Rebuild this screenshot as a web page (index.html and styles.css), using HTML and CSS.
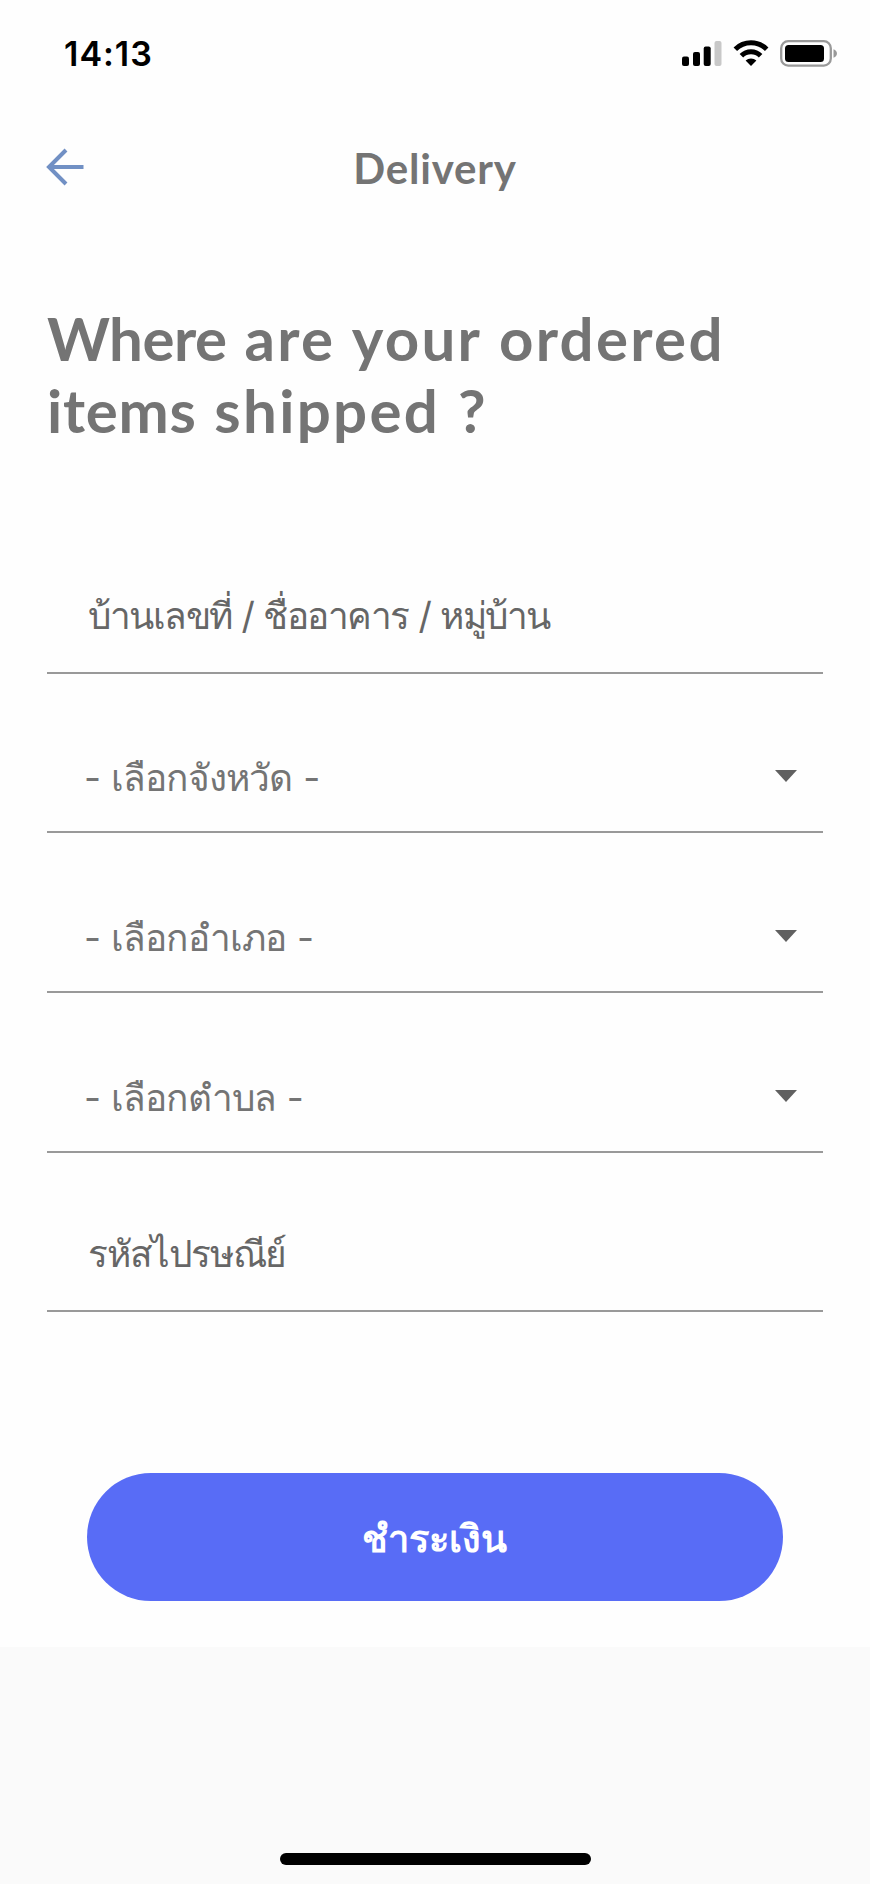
FILE: index.html
```html
<!DOCTYPE html>
<html lang="th">
<head>
  <meta charset="UTF-8">
  <meta name="viewport" content="width=device-width, initial-scale=1.0">
  <title>Delivery</title>
  <link rel="stylesheet" href="styles.css">
</head>
<body>
  <div class="screen">

    <!-- Status bar -->
    <div class="status-bar">
      <span class="time">14:13</span>
      <svg class="status-icons" viewBox="0 0 158 30" width="158" height="30">
        <rect x="0" y="18.5" width="7" height="9.5" rx="2"/>
        <rect x="11" y="14" width="7" height="14" rx="2"/>
        <rect x="21.7" y="8.5" width="7" height="19.5" rx="2"/>
        <rect x="32.5" y="3" width="7" height="25" rx="2" fill="#c8c8c8"/>
        <g fill="none" stroke="#000" stroke-width="5">
          <path d="M53.3 11.2a22.4 22.4 0 0 1 31.4 0"/>
          <path d="M59.4 17.8a13.6 13.6 0 0 1 19.2 0"/>
        </g>
        <path d="M69 28l-5.4-5.5a8 8 0 0 1 10.8 0z"/>
        <rect x="99.2" y="3.2" width="49.6" height="24.4" rx="7" fill="none" stroke="#999" stroke-width="2.3"/>
        <rect x="103" y="7" width="39" height="17" rx="3.5"/>
        <path d="M151.5 11.2c4.6 1.4 4.6 7 0 8.6z" fill="#999"/>
      </svg>
    </div>

    <!-- Header -->
    <div class="header">
      <svg class="back" viewBox="0 0 38 38" width="38" height="38">
        <path d="M37.5 19H3M20 2L3 19l17 17" fill="none" stroke="#7190c4" stroke-width="4"/>
      </svg>
      <div class="title">Delivery</div>
    </div>

    <h1><span class="tight">Where</span> are your ordered<br><span class="snug">items</span> shipped ?</h1>

    <!-- Address form -->
    <div class="form">
      <div class="field input address">บ้านเลขที่ / ชื่ออาคาร / หมู่บ้าน</div>
      <div class="field select province">- เลือกจังหวัด -<i class="arrow"></i></div>
      <div class="field select">- เลือกอำเภอ -<i class="arrow"></i></div>
      <div class="field select">- เลือกตำบล -<i class="arrow"></i></div>
      <div class="field input">รหัสไปรษณีย์</div>
    </div>

    <button class="pay">ชำระเงิน</button>
  </div>

  <div class="footer">
    <div class="home-bar"></div>
  </div>
</body>
</html>
```
FILE: styles.css
```css
* {
  margin: 0;
  padding: 0;
  box-sizing: border-box;
}

body {
  width: 870px;
  height: 1884px;
  display: flex;
  flex-direction: column;
  background: #fafafa;
  color: #747474;
  font-family: Lato, "Noto Sans", sans-serif;
}

.screen {
  height: 1647px;
  background: #fefefe;
}

.status-bar {
  height: 108px;
  padding: 38px 30px 0 64px;
  display: flex;
  justify-content: space-between;
  color: #000;
}

.time {
  font: 600 34px/32px Inter, sans-serif;
  letter-spacing: 1px;
}

.header {
  height: 120px;
  padding: 40px 46px 0;
  display: grid;
  grid-template-columns: 38px 1fr 38px;
}

.title {
  text-align: center;
  font-size: 42px;
  line-height: 41px;
  font-weight: bold;
  letter-spacing: 0.8px;
}

h1 {
  height: 346px;
  padding: 74px 46px 0 47px;
  font-size: 60px;
  line-height: 72px;
  letter-spacing: 2.3px;
  word-spacing: 1px;
  white-space: nowrap;
}

.tight {
  letter-spacing: -0.5px;
}

.snug {
  letter-spacing: 0.7px;
}

.form {
  margin: 0 47px;
}

.field {
  height: 160px;
  border-bottom: 2px solid #999;
  padding: 0 26px 25px 37px;
  display: flex;
  align-items: flex-end;
  justify-content: space-between;
  font: 37px/56px Inter, "Noto Sans", "Liberation Sans", sans-serif;
  letter-spacing: -0.8px;
  word-spacing: 1px;
  white-space: nowrap;
}

.input {
  height: 159px;
  padding: 0 26px 28px 41px;
  color: #666;
  letter-spacing: -1.2px;
}

.address {
  height: 100px;
  letter-spacing: -1.5px;
}

.province {
  height: 159px;
}

.arrow {
  margin-bottom: 24px;
  border: 11px solid transparent;
  border-top: 12px solid #606060;
  border-bottom: 0;
}

.pay {
  display: block;
  width: 696px;
  height: 128px;
  margin: 161px auto 0;
  padding-right: 2px;
  border: none;
  border-radius: 64px;
  background: #586cf6;
  color: #fff;
  font: bold 38px/60px "Noto Sans", "Liberation Sans", sans-serif;
}

.footer {
  flex: 1;
  display: flex;
  align-items: flex-end;
  justify-content: center;
  padding-bottom: 19px;
}

.home-bar {
  width: 311px;
  height: 12px;
  border-radius: 6px;
  background: #000;
}
```
